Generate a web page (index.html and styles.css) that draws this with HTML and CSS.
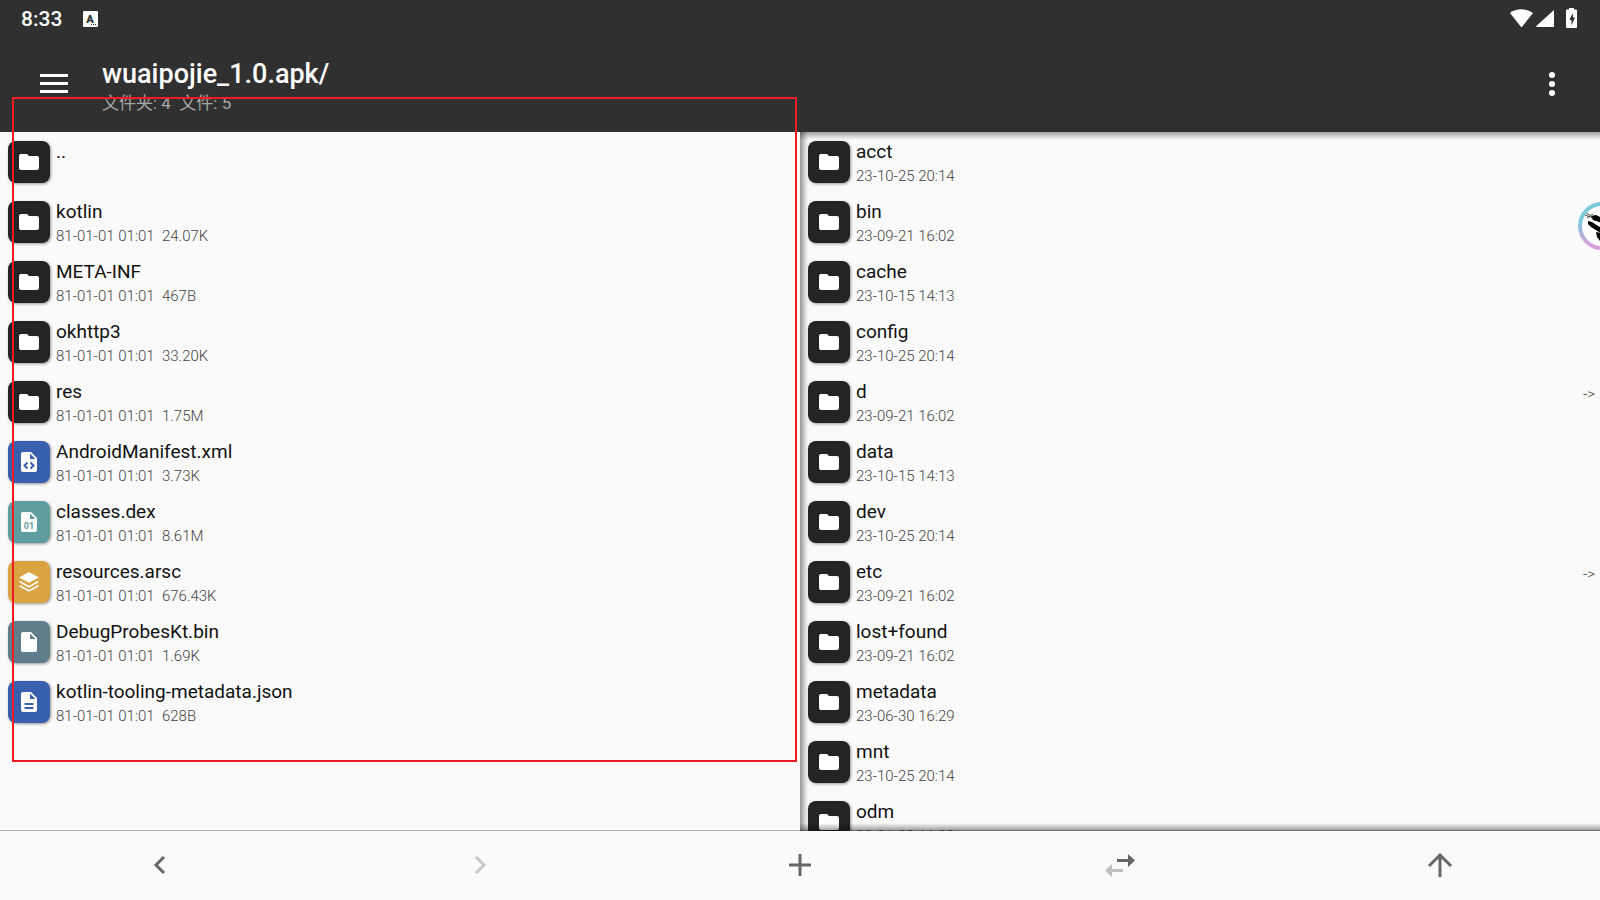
FILE: index.html
```html
<!DOCTYPE html>
<html lang="zh-CN">

<head>
    <meta charset="UTF-8">
    <meta name="viewport" content="width=device-width, initial-scale=1.0">
    <title>wuaipojie_1.0.apk</title>
    <link rel="stylesheet" href="styles.css">
</head>

<body>
    <svg class="sprite">
        <symbol id="folder" viewBox="0 0 24 24">
            <path d="M10 4H4c-1.1 0-2 .9-2 2v12c0 1.100.900 2 2 2h16c1.100 0 2-.9 2-2V8c0-1.100-.9-2-2-2h-8l-2-2z" />
        </symbol>
        <symbol id="file" viewBox="0 0 24 24">
            <path fill-rule="evenodd" d="M6 2h8l6 6v12a2 2 0 0 1-2 2H6a2 2 0 0 1-2-2V4a2 2 0 0 1 2-2zM13 3.500V9h5.500z" />
        </symbol>
        <symbol id="xml" viewBox="0 0 24 24">
            <use href="#file" />
            <path class="cut" d="M10.500 12.500L7.500 15.500l3 3M13.500 12.500l3 3-3 3" />
        </symbol>
        <symbol id="json" viewBox="0 0 24 24">
            <use href="#file" />
            <path class="cut" d="M7.500 14h9M7.500 18h9" />
        </symbol>
        <symbol id="layers" viewBox="0 0 24 24">
            <path d="M12 0L24 6.500 12 13 0 6.500z" />
            <path class="line" d="M.8 11.500L12 17.700l11.200-6.200M.8 16.500L12 22.700l11.200-6.200" />
        </symbol>
    </svg>

    <header class="top">
        <div class="status">
            <span class="time">8:33</span>
            <svg class="app" viewBox="0 0 15 16">
                <rect width="15" height="16" rx="1" />
                <text x="7" y="12" text-anchor="middle">A</text>
                <path d="M8 13h1v1H8zM10 13h1v1h-1zM12 13h1v1h-1z" />
            </svg>
            <svg class="signals" viewBox="0 0 68 20">
                <path d="M0 5C6 .0 16 .0 23 5L11.500 19.500z" />
                <path d="M44 2v16.500a.5.5 0 0 1-.5.5H26.500l-.2-1z" />
                <path fill-rule="evenodd" d="M59 0h5v1.500h2q1 0 1 1V19q0 1-1 1H57q-1 0-1-1V2.500q0-1 1-1h2zM62.500 5L59.500 12h2v5.500l3.500-8h-2z" />
            </svg>
        </div>
        <div class="toolbar">
            <button class="menu" aria-label="菜单"><svg viewBox="0 0 28 20">
                    <path d="M0 0h28v3H0zM0 8h28v3H0zM0 16h28v3H0z" />
                </svg></button>
            <div class="heading">
                <h1>wuaipojie_1.0.apk/</h1>
                <p>文件夹: 4&nbsp; 文件: 5</p>
            </div>
            <button class="more" aria-label="更多"><svg viewBox="0 0 6 24">
                    <circle cx="3" cy="3" r="3" />
                    <circle cx="3" cy="12" r="3" />
                    <circle cx="3" cy="21" r="3" />
                </svg></button>
        </div>
    </header>

    <main class="panes">
        <ul class="pane left">
            <li><span class="tile"><svg><use href="#folder" /></svg></span>
                <div><b>..</b></div></li>
            <li><span class="tile"><svg><use href="#folder" /></svg></span>
                <div><b>kotlin</b><small>81-01-01 01:01&nbsp; 24.07K</small></div></li>
            <li><span class="tile"><svg><use href="#folder" /></svg></span>
                <div><b>META-INF</b><small>81-01-01 01:01&nbsp; 467B</small></div></li>
            <li><span class="tile"><svg><use href="#folder" /></svg></span>
                <div><b>okhttp3</b><small>81-01-01 01:01&nbsp; 33.20K</small></div></li>
            <li><span class="tile"><svg><use href="#folder" /></svg></span>
                <div><b>res</b><small>81-01-01 01:01&nbsp; 1.75M</small></div></li>
            <li><span class="tile blue"><svg><use href="#xml" /></svg></span>
                <div><b>AndroidManifest.xml</b><small>81-01-01 01:01&nbsp; 3.73K</small></div></li>
            <li><span class="tile teal"><svg viewBox="0 0 24 24">
                        <use href="#file" />
                        <text class="bits" x="12" y="19" text-anchor="middle">01</text>
                    </svg></span>
                <div><b>classes.dex</b><small>81-01-01 01:01&nbsp; 8.61M</small></div></li>
            <li><span class="tile amber"><svg class="stack"><use href="#layers" /></svg></span>
                <div><b>resources.arsc</b><small>81-01-01 01:01&nbsp; 676.43K</small></div></li>
            <li><span class="tile slate"><svg><use href="#file" /></svg></span>
                <div><b>DebugProbesKt.bin</b><small>81-01-01 01:01&nbsp; 1.69K</small></div></li>
            <li><span class="tile blue"><svg><use href="#json" /></svg></span>
                <div><b>kotlin-tooling-metadata.json</b><small>81-01-01 01:01&nbsp; 628B</small></div></li>
        </ul>

        <ul class="pane right">
            <li><span class="tile"><svg><use href="#folder" /></svg></span>
                <div><b>acct</b><small>23-10-25 20:14</small></div></li>
            <li><span class="tile"><svg><use href="#folder" /></svg></span>
                <div><b>bin</b><small>23-09-21 16:02</small></div></li>
            <li><span class="tile"><svg><use href="#folder" /></svg></span>
                <div><b>cache</b><small>23-10-15 14:13</small></div></li>
            <li><span class="tile"><svg><use href="#folder" /></svg></span>
                <div><b>config</b><small>23-10-25 20:14</small></div></li>
            <li><span class="tile"><svg><use href="#folder" /></svg></span>
                <div><b>d</b><small>23-09-21 16:02</small></div><i>-&gt;</i></li>
            <li><span class="tile"><svg><use href="#folder" /></svg></span>
                <div><b>data</b><small>23-10-15 14:13</small></div></li>
            <li><span class="tile"><svg><use href="#folder" /></svg></span>
                <div><b>dev</b><small>23-10-25 20:14</small></div></li>
            <li><span class="tile"><svg><use href="#folder" /></svg></span>
                <div><b>etc</b><small>23-09-21 16:02</small></div><i>-&gt;</i></li>
            <li><span class="tile"><svg><use href="#folder" /></svg></span>
                <div><b>lost+found</b><small>23-09-21 16:02</small></div></li>
            <li><span class="tile"><svg><use href="#folder" /></svg></span>
                <div><b>metadata</b><small>23-06-30 16:29</small></div></li>
            <li><span class="tile"><svg><use href="#folder" /></svg></span>
                <div><b>mnt</b><small>23-10-25 20:14</small></div></li>
            <li><span class="tile"><svg><use href="#folder" /></svg></span>
                <div><b>odm</b><small>23-01-30 11:29</small></div></li>
        </ul>
    </main>

    <nav class="bottom">
        <button aria-label="后退"><svg viewBox="0 0 36 36">
                <path d="M22 10l-8 8 8 8" />
            </svg></button>
        <button aria-label="前进" disabled><svg viewBox="0 0 36 36">
                <path d="M14 10l8 8-8 8" />
            </svg></button>
        <button aria-label="新建"><svg viewBox="0 0 36 36">
                <path d="M18 7v22M7 18h22" />
            </svg></button>
        <button aria-label="同步"><svg class="swap" viewBox="0 0 36 36">
                <path d="M15 12h11V7l7 6.500-7 6.500v-5H15z" />
                <path class="faded" d="M21 22H10v-5l-7 6.500 7 6.500v-5h11z" />
            </svg></button>
        <button aria-label="上级目录"><svg viewBox="0 0 36 36">
                <path d="M18 30V8M7 19L18 8l11 11" />
            </svg></button>
    </nav>

    <div class="frame"></div>
    <div class="floating">
        <svg viewBox="0 0 40 40">
            <path d="M9 10l5-1 8 4v4l-5-1-6-2z" />
            <path d="M6 15l4 1 6 4 6 3v5l-5-2-8-5-3-3z" />
            <path d="M14 26l6 1 3 4v5l-5-1-3-4z" />
            <path class="hair" d="M3 9l8 3M5 12l6-4M4 7l4 2" />
        </svg>
    </div>
</body>

</html>
```

FILE: styles.css
```css
* {
    box-sizing: border-box;
}

body {
    margin: 0;
    height: 100vh;
    display: flex;
    flex-direction: column;
    position: relative;
    overflow: hidden;
    background: #fafafa;
    color: #111;
    font-family: Roboto, "Noto Sans CJK SC", sans-serif;
}

button {
    border: none;
    background: none;
    padding: 0;
    display: flex;
    align-items: center;
    justify-content: center;
    cursor: pointer;
}

.sprite {
    position: absolute;
    width: 0;
    height: 0;
}

/* header */

.top {
    flex: none;
    height: 132px;
    background: #303030;
    color: #fff;
    fill: #fff;
}

.status {
    display: flex;
    align-items: center;
    height: 36px;
    padding: 1px 22px 0 21px;
}

.time {
    font-size: 21px;
    font-weight: 500;
}

.app {
    width: 15px;
    height: 16px;
    margin-left: 21px;
}

.app text {
    font-size: 11px;
    font-weight: 900;
}

.app text,
.app path {
    fill: #303030;
}

.signals {
    width: 68px;
    height: 20px;
    margin-left: auto;
    margin-bottom: 2px;
}

.toolbar {
    display: flex;
    align-items: center;
    height: 96px;
    padding: 0 45px 0 40px;
}

.menu svg {
    width: 28px;
    height: 20px;
    fill: #fff;
}

.heading {
    flex: 1;
    margin-left: 34px;
    padding-top: 5px;
}

.heading h1 {
    margin: 0;
    font-size: 27px;
    line-height: 32px;
    font-weight: 500;
}

.heading p {
    margin: 0;
    font-size: 17px;
    line-height: 26px;
    color: #a8a8a8;
}

.more svg {
    width: 6px;
    height: 24px;
    fill: #fff;
}

/* file lists */

.panes {
    flex: 1;
    min-height: 0;
    display: flex;
}

.pane {
    flex: 1;
    position: relative;
    margin: 0;
    padding: 0;
    list-style: none;
    overflow: hidden;
}

/* shadow covers the bottom bar's border */
.right {
    margin-bottom: -1px;
}

.right::after {
    content: "";
    position: absolute;
    inset: 0;
    background:
        linear-gradient(to bottom, rgba(0, 0, 0, 0.35), transparent) top / 100% 8px no-repeat,
        linear-gradient(to right, rgba(0, 0, 0, 0.4), transparent) left / 8px 100% no-repeat,
        linear-gradient(to top, rgba(0, 0, 0, 0.4), transparent) bottom / 100% 8px no-repeat;
}

.pane li {
    display: flex;
    height: 60px;
    padding: 9px 5px 0 8px;
}

.tile {
    display: flex;
    align-items: center;
    justify-content: center;
    width: 42px;
    height: 42px;
    margin-right: 6px;
    border-radius: 8px;
    background: #242424;
    box-shadow: 1px 1px 3px rgba(0, 0, 0, 0.4);
    fill: #fff;
    color: #242424;
}

.tile svg {
    width: 24px;
    height: 24px;
}

.tile .stack {
    width: 20px;
    height: 20px;
}

.blue {
    background: #385eae;
    color: #385eae;
}

.teal {
    background: #5f9ea0;
    color: #5f9ea0;
}

.amber {
    background: #d9a441;
    color: #d9a441;
}

.slate {
    background: #607d8b;
    color: #607d8b;
}

.cut {
    fill: none;
    stroke: currentColor;
    stroke-width: 2;
}

.line {
    fill: none;
    stroke: #fff;
    stroke-width: 2;
}

.bits {
    fill: currentColor;
    font-size: 9px;
    font-weight: 700;
}

.pane div {
    flex: 1;
}

.pane b {
    display: block;
    font-size: 19px;
    line-height: 22px;
    font-weight: 400;
}

.pane small {
    display: block;
    font-size: 15px;
    line-height: 26px;
    font-weight: 300;
    color: #444;
}

.pane i {
    font-size: 15px;
    line-height: 26px;
    font-style: normal;
    font-weight: 300;
    color: #333;
}

/* bottom bar */

.bottom {
    flex: none;
    display: flex;
    height: 70px;
    padding-bottom: 2px;
    border-top: 1px solid #b0b0b0;
    background: #fafafa;
}

.bottom button {
    flex: 1;
}

.bottom svg {
    width: 36px;
    height: 36px;
    fill: none;
    stroke: #666;
    stroke-width: 3;
}

.bottom button:disabled svg {
    stroke: #c8c8c8;
}

.bottom .swap {
    fill: #666;
    stroke: none;
}

.swap .faded {
    fill: #c0c0c0;
}

/* overlays */

.frame {
    position: absolute;
    top: 97px;
    bottom: 138px;
    left: 12px;
    right: calc(50% + 3px);
    border: 2px solid #ed1c24;
}

.floating {
    position: absolute;
    top: 202px;
    right: -26px;
    width: 48px;
    height: 48px;
    padding: 4px;
    border-radius: 50%;
    background: linear-gradient(#7cc8dc 40%, #d9a0dc 90%);
}

.floating svg {
    display: block;
    width: 40px;
    height: 40px;
    border-radius: 50%;
    background: #fff;
}

.floating .hair {
    fill: none;
    stroke: #444;
    stroke-width: 1;
}
```
